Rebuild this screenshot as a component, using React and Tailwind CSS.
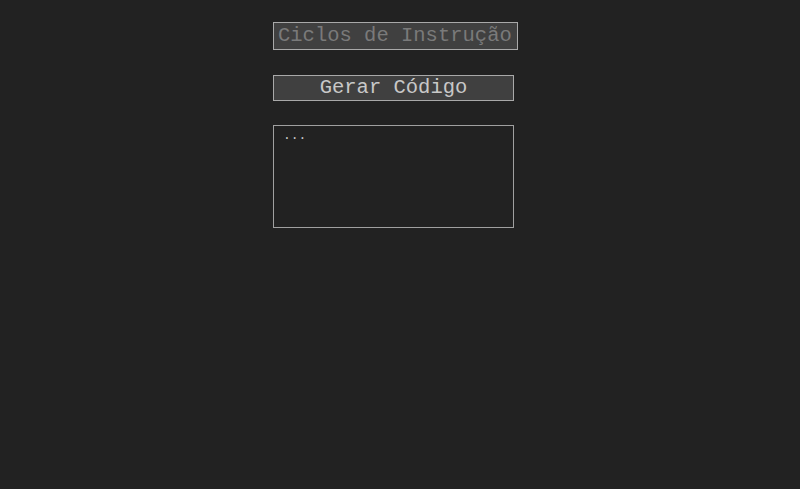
import React from "react";

export default function App() {
  return (
    <div className="min-h-[489px] w-full bg-[#222222] pl-[273px] pt-[22px] font-['Liberation_Mono','Courier_New',monospace]">
      <div className="flex flex-col items-start">
        <input
          type="text"
          placeholder="Ciclos de Instrução"
          className="box-border h-[28px] w-[245px] border border-[#a9a9a9] bg-[#404040] px-[4px] font-['Liberation_Mono','Courier_New',monospace] text-[20.5px] text-[#cccccc] outline-none placeholder:text-[#7a7a7a]"
        />
        <button className="mt-[25px] box-border h-[26px] w-[241px] border border-[#a9a9a9] bg-[#404040] font-['Liberation_Mono','Courier_New',monospace] text-[20.5px] leading-none text-[#c8c8c8]">
          Gerar Código
        </button>
        <div className="mt-[24px] box-border h-[103px] w-[241px] border-[1.5px] border-[#a0a0a0] bg-[#222222] px-[9px] pt-[2px] text-[13px] leading-[16px] text-[#c8c8c8]">
          ...
        </div>
      </div>
    </div>
  );
}
